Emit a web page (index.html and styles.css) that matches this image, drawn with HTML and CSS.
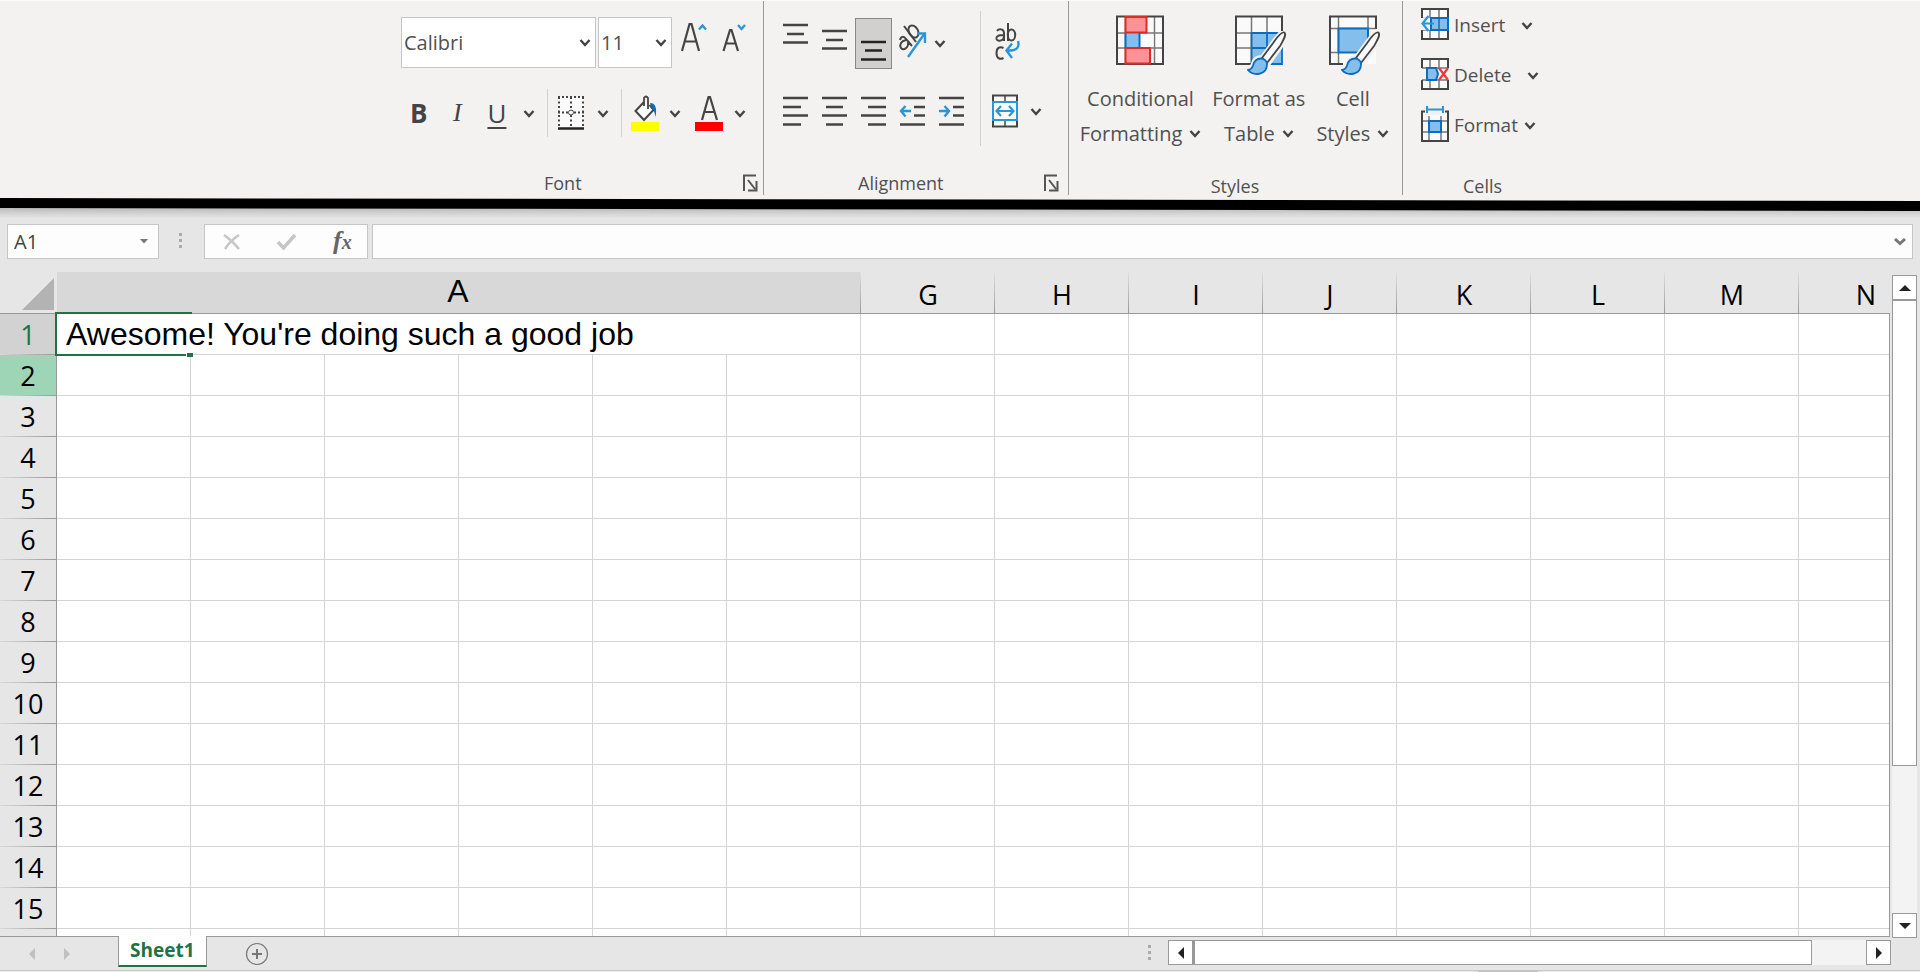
FILE: index.html
```html
<!DOCTYPE html>
<html lang="en">
<head>
<meta charset="utf-8">
<title>Sheet1</title>
<link rel="stylesheet" href="styles.css">
</head>
<body>
<svg class="defs" aria-hidden="true">
  <symbol id="chev" viewBox="0 0 12 10"><path d="M1.500 2L6 7l4.500-5" fill="none" stroke="#444" stroke-width="2.4"/></symbol>
  <symbol id="launch" viewBox="0 0 15 18"><path d="M1 17V1.5h12" fill="none" stroke="#555" stroke-width="2"/><path d="M5 6l7 9M13.5 7v9.500H5" fill="none" stroke="#555" stroke-width="2"/></symbol>
  <symbol id="brush" viewBox="0 0 40 46"><path d="M38 1c-3-1-7 4-12 11L15 27c-5-1-8 2-9 7-1 3-3 4-6 5 4 5 18 8 21-6L33 16c5-8 7-12 5-15z" fill="#f3f2f1" stroke="#f3f2f1" stroke-width="5"/><path d="M37.500 1.500c-3-1-7 4-11 10L15 27l5 5 13-17c4-7 6.500-11 4.500-13.500z" fill="#fafafa" stroke="#444" stroke-width="1.800"/><path d="M14 27.500c-5 0-7 3-8 7-1 3-2 4-5 4.500 5 6 19 6 19-6 0-3-3-5.500-6-5.500z" fill="#83beec" stroke="#0f6cbd" stroke-width="1.800"/></symbol>
</svg>

<header class="ribbon">
  <section class="group font-group" aria-label="Font">
    <div class="row pick-row">
      <span class="pick pick-name"><select aria-label="Font name"><option>Calibri</option></select><svg width="12" height="10"><use href="#chev"/></svg></span>
      <span class="pick pick-size"><select aria-label="Font size"><option>11</option></select><svg width="12" height="10"><use href="#chev"/></svg></span>
      <button class="tool grow" aria-label="Increase font size"><svg width="28" height="32" viewBox="0 0 28 32"><path d="M2 29L9.500 2h2L19 29M5 19.500h11" fill="none" stroke="#444" stroke-width="2.200"/><path d="M19 7.500l3.500-4 3.500 4" fill="none" stroke="#2b95d6" stroke-width="2.400"/></svg></button>
      <button class="tool shrink" aria-label="Decrease font size"><svg width="25" height="32" viewBox="0 0 25 32"><path d="M1.500 29L8 8h1.500L16 29M4 21.500h9.500" fill="none" stroke="#444" stroke-width="2.200"/><path d="M16 3l3.500 4L23 3" fill="none" stroke="#2b95d6" stroke-width="2.400"/></svg></button>
    </div>
    <div class="row style-row">
      <button class="tool glyph bold">B</button>
      <button class="tool glyph italic">I</button>
      <button class="tool glyph under">U</button>
      <button class="tool drop" aria-label="Underline options"><svg width="12" height="10"><use href="#chev"/></svg></button>
      <i class="rule"></i>
      <button class="tool" aria-label="Bottom border"><svg width="28" height="36" viewBox="0 0 28 36"><rect x="1" y="2" width="26" height="30" fill="#fafafa"/><path d="M1 2h26M1 17.500h26" stroke="#444" stroke-width="2" stroke-dasharray="2 2"/><path d="M2 2v31M14 2v31M26 2v31" stroke="#444" stroke-width="2" stroke-dasharray="2 2.500"/><circle cx="14" cy="17.500" r="2.500" fill="#fafafa" stroke="#444"/><path d="M1 33.500h26" stroke="#222" stroke-width="2.500"/></svg></button>
      <button class="tool drop" aria-label="Border options"><svg width="12" height="10"><use href="#chev"/></svg></button>
      <i class="rule"></i>
      <button class="tool" aria-label="Fill color"><svg width="28" height="36" viewBox="0 0 28 36"><path d="M13 7L4.500 16l8.500 9 9.500-10-4-5" fill="#fafafa" stroke="#444" stroke-width="2"/><path d="M13 11V3q2-3 4 0v11" fill="none" stroke="#444" stroke-width="1.800"/><path d="M19 8c6 0 7 6 5.500 14-1-4-1-7-4-9z" fill="#0f6cbd"/><path d="M0 27h28v9H0z" fill="#ff0"/></svg></button>
      <button class="tool drop drop-fill" aria-label="Fill options"><svg width="12" height="10"><use href="#chev"/></svg></button>
      <button class="tool" aria-label="Font color"><svg width="28" height="36" viewBox="0 0 28 36"><path d="M7 25L13.500 2h1.500L22 25M9.500 17h10" fill="none" stroke="#444" stroke-width="2.200"/><path d="M0 27h28v9H0z" fill="red"/></svg></button>
      <button class="tool drop drop-color" aria-label="Font color options"><svg width="12" height="10"><use href="#chev"/></svg></button>
    </div>
    <footer><span>Font</span><button class="tool launcher" aria-label="Font settings"><svg width="15" height="18"><use href="#launch"/></svg></button></footer>
  </section>

  <section class="group align-group" aria-label="Alignment">
    <div class="align-main">
      <div class="row align-top">
        <button class="tool" aria-label="Top align"><svg width="25" height="30" viewBox="0 0 25 30"><path d="M0 4h25M4 13h17M0 21.500h25" stroke="#444" stroke-width="2.400"/></svg></button>
        <button class="tool" aria-label="Middle align"><svg width="25" height="30" viewBox="0 0 25 30"><path d="M0 10h25M4 19h17M0 27.500h25" stroke="#444" stroke-width="2.400"/></svg></button>
        <button class="tool pressed" aria-label="Bottom align"><svg width="25" height="42" viewBox="0 0 25 42"><path d="M0 19h25M4 27.500h17M0 36.500h25" stroke="#222" stroke-width="2.400"/></svg></button>
        <button class="tool orient" aria-label="Orientation"><svg width="30" height="38" viewBox="0 0 30 38"><g fill="none" stroke="#444" stroke-width="2"><path d="M2 19c1-4 4-4 6-1l6 7M8 19c-5 1-7 5-5 8s8 0 7-6"/><path d="M6 5l12 16"/><ellipse cx="15.500" cy="10.500" rx="4.500" ry="6.500" transform="rotate(-30 15.500 10.500)"/></g><path d="M10 36L27 12M19 12.500h8V22" fill="none" stroke="#2b95d6" stroke-width="2.400"/></svg></button>
        <button class="tool drop" aria-label="Orientation options"><svg width="12" height="10"><use href="#chev"/></svg></button>
      </div>
      <div class="row align-low">
        <button class="tool" aria-label="Align left"><svg width="25" height="32" viewBox="0 0 25 32"><path d="M0 3h25M0 12h18M0 20.500h25M0 29.500h18" stroke="#444" stroke-width="2.400"/></svg></button>
        <button class="tool" aria-label="Center"><svg width="25" height="32" viewBox="0 0 25 32"><path d="M0 3h25M4 12h17M0 20.500h25M4 29.500h17" stroke="#444" stroke-width="2.400"/></svg></button>
        <button class="tool" aria-label="Align right"><svg width="25" height="32" viewBox="0 0 25 32"><path d="M0 3h25M7 12h18M0 20.500h25M7 29.500h18" stroke="#444" stroke-width="2.400"/></svg></button>
        <button class="tool" aria-label="Decrease indent"><svg width="25" height="32" viewBox="0 0 25 32"><path d="M0 3h25M14 12h11M14 20.500h11M0 29.500h25" stroke="#444" stroke-width="2.400"/><path d="M11 16H1M5.500 11L1 16l4.500 5.500" fill="none" stroke="#2b95d6" stroke-width="2.400"/></svg></button>
        <button class="tool" aria-label="Increase indent"><svg width="25" height="32" viewBox="0 0 25 32"><path d="M0 3h25M14 12h11M14 20.500h11M0 29.500h25" stroke="#444" stroke-width="2.400"/><path d="M0 16h10M5.500 11l4.500 5-4.500 5.500" fill="none" stroke="#2b95d6" stroke-width="2.400"/></svg></button>
      </div>
    </div>
    <div class="align-side">
      <button class="tool wrap" aria-label="Wrap text"><svg width="26" height="38" viewBox="0 0 26 38"><g fill="none" stroke="#444" stroke-width="2"><path d="M2 9c2-3 7-2 7 2v8M9 13c-7 0-8 2-7.500 4 1 3 7 2 7.500-2"/><path d="M13 1v18"/><ellipse cx="16.500" cy="13" rx="3.700" ry="5.500"/><path d="M8.500 26c-4-2-7 0-7 5s3 7 7 5"/></g><path d="M23 19c2 7-2 10-11 9.500M17 21.500L11.500 28.500 17 36" fill="none" stroke="#2b95d6" stroke-width="2.400"/></svg></button>
      <span class="merge"><button class="tool" aria-label="Merge and center"><svg width="26" height="34" viewBox="0 0 26 34"><rect x="1" y="1.500" width="24" height="31" fill="#fafafa" stroke="#444" stroke-width="2"/><path d="M13 2v6M13 26v6" stroke="#444" stroke-width="1.500"/><rect x="1" y="8" width="24" height="18" fill="#fafafa" stroke="#2b95d6" stroke-width="2"/><path d="M4.500 17h17M9 12l-4.500 5L9 22M17 12l4.500 5L17 22" fill="none" stroke="#2b95d6" stroke-width="2.200"/></svg></button>
      <button class="tool drop" aria-label="Merge options"><svg width="12" height="10"><use href="#chev"/></svg></button></span>
    </div>
    <footer><span>Alignment</span><button class="tool launcher" aria-label="Alignment settings"><svg width="15" height="18"><use href="#launch"/></svg></button></footer>
  </section>

  <section class="group styles-group" aria-label="Styles">
    <div class="bigs">
      <button class="tool big"><svg width="54" height="62" viewBox="0 0 54 62"><path d="M4 2h46v47H4z" fill="#fafafa"/><path d="M12.500 2v47M41.500 2v47M4 18h46M4 33h46" stroke="#777" stroke-width="1.500"/><path d="M4 1.500h46v47.500H4z" fill="none" stroke="#444" stroke-width="2"/><path d="M27.500 19h13v13h-13z" fill="#fafafa"/><path d="M12.500 18h14v15h-14z" fill="#83beec"/><path d="M26.500 18v15M12.500 18v15" stroke="#0f6cbd" stroke-width="2"/><path d="M12.500 2h21v15.500h-21zM12.500 33h24.500v15.500H12.500z" fill="#ff9197" stroke="#dc2c24" stroke-width="2"/></svg><span>Conditional</span><span>Formatting <svg width="12" height="10"><use href="#chev"/></svg></span></button>
      <button class="tool big"><svg width="54" height="62" viewBox="0 0 54 62"><path d="M4 2h46v47H4z" fill="#fafafa"/><path d="M19.500 18H50v31H19.500z" fill="#83beec"/><path d="M19.500 2v47M35 2v16M4 18h46M4 33h46" stroke="#777" stroke-width="1.500"/><path d="M19.500 49V18H50v31zM35 18v31M19.500 33H50" fill="none" stroke="#0f6cbd" stroke-width="1.800"/><path d="M50 17V1.500H4V49h15" fill="none" stroke="#444" stroke-width="2"/><use href="#brush" x="15" y="16" width="40" height="46"/></svg><span>Format as</span><span>Table <svg width="12" height="10"><use href="#chev"/></svg></span></button>
      <button class="tool big"><svg width="54" height="62" viewBox="0 0 54 62"><path d="M4 2h46v47H4z" fill="#fafafa"/><path d="M12.500 2v47M42 2v12M4 13.500h46M4 37.500h9" stroke="#777" stroke-width="1.500"/><path d="M12.500 13.500H42V37.500H12.500z" fill="#83beec" stroke="#0f6cbd" stroke-width="2"/><path d="M50 14V1.500H4V49h13" fill="none" stroke="#444" stroke-width="2"/><use href="#brush" x="15" y="16" width="40" height="46"/></svg><span>Cell</span><span>Styles <svg width="12" height="10"><use href="#chev"/></svg></span></button>
    </div>
    <footer><span>Styles</span></footer>
  </section>

  <section class="group cells-group" aria-label="Cells">
    <button class="tool line"><svg width="28" height="36" viewBox="0 0 28 36"><path d="M1 3h26v30H1z" fill="#fafafa"/><path d="M9 3v30M18 3v30M1 12.500h26M1 24h26" stroke="#777" stroke-width="1.500"/><path d="M1 3h26v30H1z" fill="none" stroke="#444" stroke-width="2"/><path d="M0 12h10v12H0z" fill="#f3f2f1"/><path d="M10 12h17v12H10z" fill="#83beec" stroke="#0f6cbd" stroke-width="2"/><path d="M18 12v12" stroke="#0f6cbd" stroke-width="1.500"/><path d="M13 17.500H1.500M7.500 10L1.500 17.500 7.500 25" fill="none" stroke="#2b95d6" stroke-width="2.200"/></svg><span>Insert</span><svg class="gap-a" width="12" height="10"><use href="#chev"/></svg></button>
    <button class="tool line"><svg width="28" height="36" viewBox="0 0 28 36"><path d="M1 3h26v30H1z" fill="#fafafa"/><path d="M9 3v30M18 3v30M1 12h26M1 24h26" stroke="#777" stroke-width="1.500"/><path d="M1 12V3h26v9M1 24v9h26v-9" fill="none" stroke="#444" stroke-width="2"/><path d="M0 13h28v10H0z" fill="#f3f2f1"/><path d="M6 12h9l2 6-2 6H6z" fill="#83beec" stroke="#0f6cbd" stroke-width="2"/><path d="M18 12l9 12M27 12l-9 12" stroke="#f03a3e" stroke-width="2.200"/></svg><span>Delete</span><svg class="gap-b" width="12" height="10"><use href="#chev"/></svg></button>
    <button class="tool line"><svg width="28" height="36" viewBox="0 0 28 36"><path d="M1 6h26v29H1z" fill="#fafafa"/><path d="M8 10v25M20 10v25M1 15h26M1 26h26" stroke="#777" stroke-width="1.500"/><path d="M4 5.500H1V35h26V5.500h-3" fill="none" stroke="#444" stroke-width="2"/><path d="M4 5h20v4H4z" fill="#f3f2f1"/><path d="M8 15h12v11H8z" fill="#83beec" stroke="#0f6cbd" stroke-width="2"/><path d="M6 0v7M22 0v7M6 3.500h16" stroke="#2b95d6" stroke-width="2"/></svg><span>Format</span><svg class="gap-c" width="12" height="10"><use href="#chev"/></svg></button>
    <footer><span>Cells</span></footer>
  </section>
</header>
<div class="divider"></div>

<div class="formula-bar">
  <label class="name-box"><input type="text" value="A1" aria-label="Name box"><svg width="8" height="5"><path d="M0 0h8L4 4.500z" fill="#777"/></svg></label>
  <svg class="dots" width="3" height="15"><path d="M0 0h3v3H0zM0 6h3v3H0zM0 12h3v3H0z" fill="#aaa"/></svg>
  <div class="fx-box">
    <button class="tool" aria-label="Cancel"><svg width="18" height="18" viewBox="0 0 18 18"><path d="M1 2c6 4 11 9 15 14M16 2C10 6 5 11 2 16" fill="none" stroke="#c6c6c6" stroke-width="2.500"/></svg></button>
    <button class="tool" aria-label="Enter"><svg width="20" height="18" viewBox="0 0 20 18"><path d="M1 9l5.500 6L18 2" fill="none" stroke="#c6c6c6" stroke-width="3.500"/></svg></button>
    <button class="tool fx" aria-label="Insert function">f<small>x</small></button>
  </div>
  <div class="formula"><input type="text" aria-label="Formula"><button class="tool" aria-label="Expand formula bar"><svg width="12" height="10" viewBox="0 0 12 10"><path d="M1 2l5 4.500L11 2" fill="none" stroke="#777" stroke-width="3"/></svg></button></div>
</div>

<main class="sheet">
  <div class="grid">
    <table>
      <colgroup><col class="c-num"><col span="14" class="c-cell"></colgroup>
      <thead>
        <tr><th class="corner"><svg width="32" height="32"><path d="M32 0v32H0z" fill="#b3b3b3"/></svg></th><th class="wide" colspan="6">A</th><th>G</th><th>H</th><th>I</th><th>J</th><th>K</th><th>L</th><th>M</th><th>N</th></tr>
      </thead>
      <tbody>
        <tr><th class="current">1</th><td class="entry" colspan="6">Awesome! You're doing such a good job<i class="cursor"></i></td><td></td><td></td><td></td><td></td><td></td><td></td><td></td><td></td></tr>
        <tr><th class="hint">2</th><td></td><td></td><td></td><td></td><td></td><td></td><td></td><td></td><td></td><td></td><td></td><td></td><td></td><td></td></tr>
        <tr><th>3</th><td></td><td></td><td></td><td></td><td></td><td></td><td></td><td></td><td></td><td></td><td></td><td></td><td></td><td></td></tr>
        <tr><th>4</th><td></td><td></td><td></td><td></td><td></td><td></td><td></td><td></td><td></td><td></td><td></td><td></td><td></td><td></td></tr>
        <tr><th>5</th><td></td><td></td><td></td><td></td><td></td><td></td><td></td><td></td><td></td><td></td><td></td><td></td><td></td><td></td></tr>
        <tr><th>6</th><td></td><td></td><td></td><td></td><td></td><td></td><td></td><td></td><td></td><td></td><td></td><td></td><td></td><td></td></tr>
        <tr><th>7</th><td></td><td></td><td></td><td></td><td></td><td></td><td></td><td></td><td></td><td></td><td></td><td></td><td></td><td></td></tr>
        <tr><th>8</th><td></td><td></td><td></td><td></td><td></td><td></td><td></td><td></td><td></td><td></td><td></td><td></td><td></td><td></td></tr>
        <tr><th>9</th><td></td><td></td><td></td><td></td><td></td><td></td><td></td><td></td><td></td><td></td><td></td><td></td><td></td><td></td></tr>
        <tr><th>10</th><td></td><td></td><td></td><td></td><td></td><td></td><td></td><td></td><td></td><td></td><td></td><td></td><td></td><td></td></tr>
        <tr><th>11</th><td></td><td></td><td></td><td></td><td></td><td></td><td></td><td></td><td></td><td></td><td></td><td></td><td></td><td></td></tr>
        <tr><th>12</th><td></td><td></td><td></td><td></td><td></td><td></td><td></td><td></td><td></td><td></td><td></td><td></td><td></td><td></td></tr>
        <tr><th>13</th><td></td><td></td><td></td><td></td><td></td><td></td><td></td><td></td><td></td><td></td><td></td><td></td><td></td><td></td></tr>
        <tr><th>14</th><td></td><td></td><td></td><td></td><td></td><td></td><td></td><td></td><td></td><td></td><td></td><td></td><td></td><td></td></tr>
        <tr><th>15</th><td></td><td></td><td></td><td></td><td></td><td></td><td></td><td></td><td></td><td></td><td></td><td></td><td></td><td></td></tr>
        <tr><th></th><td></td><td></td><td></td><td></td><td></td><td></td><td></td><td></td><td></td><td></td><td></td><td></td><td></td><td></td></tr>
      </tbody>
    </table>
  </div>
  <div class="vscroll">
    <button class="arrow" aria-label="Scroll up"><svg width="12" height="6"><path d="M0 6h12L6 0z" fill="#222"/></svg></button>
    <div class="track"><div class="thumb"></div></div>
    <button class="arrow" aria-label="Scroll down"><svg width="12" height="6"><path d="M0 0h12L6 6z" fill="#222"/></svg></button>
  </div>
</main>

<nav class="tabs">
  <button class="tool prev" aria-label="Previous sheet"><svg width="6" height="12"><path d="M6 0v12L0 6z" fill="#c0c0c0"/></svg></button>
  <button class="tool next" aria-label="Next sheet"><svg width="6" height="12"><path d="M0 0v12l6-6z" fill="#c0c0c0"/></svg></button>
  <button class="tab">Sheet1</button>
  <button class="tool add" aria-label="New sheet"><svg width="24" height="24" viewBox="0 0 24 24"><circle cx="12" cy="12" r="10.500" fill="none" stroke="#777" stroke-width="1.200"/><path d="M12 7v10M7 12h10" stroke="#777" stroke-width="2"/></svg></button>
  <svg class="dots" width="3" height="15"><path d="M0 0h3v3H0zM0 6h3v3H0zM0 12h3v3H0z" fill="#aaa"/></svg>
  <div class="hscroll">
    <button class="arrow" aria-label="Scroll left"><svg width="6" height="12"><path d="M6 0v12L0 6z" fill="#222"/></svg></button>
    <div class="track"><div class="thumb"></div></div>
    <button class="arrow" aria-label="Scroll right"><svg width="6" height="12"><path d="M0 0v12l6-6z" fill="#222"/></svg></button>
  </div>
</nav>
<div class="status"><i></i></div>
</body>
</html>
```
FILE: styles.css
```css
* { box-sizing: border-box; }
body {
  margin: 0;
  height: 100vh;
  display: flex;
  flex-direction: column;
  overflow: hidden;
  background: #e6e6e6;
  font-family: "Open Sans", "Noto Sans", sans-serif;
  color: #000;
}
button, select, input { font: inherit; color: inherit; }
svg { display: block; flex: none; overflow: visible; }
.defs { position: absolute; width: 0; height: 0; }
.tool { display: flex; align-items: center; padding: 0; border: 0; background: none; }

/* Ribbon */
.ribbon {
  flex: none;
  display: flex;
  min-height: 198px;
  padding: 0 0 3px 390px;
  background: #f3f2f1;
  border-top: 1px solid #fafafa;
  font-size: 20px;
  color: #505050;
}
.group { display: flex; flex-direction: column; border-right: 1px solid #999; }
.group footer {
  display: flex;
  justify-content: center;
  align-items: center;
  margin-top: auto;
  font-size: 18px;
  line-height: 24px;
}
.launcher { margin-left: auto; }
.row { display: flex; }

.font-group { width: 374px; padding: 16px 5px 0 11px; }
.pick-row { gap: 2px; }
.pick { display: grid; align-items: center; height: 51px; background: #fff; border: 1px solid #c6c6c6; }
.pick select, .pick svg { grid-area: 1 / 1; }
.pick select { width: 100%; height: 49px; padding: 0 2px; border: 0; background: none; appearance: none; }
.pick svg { justify-self: end; margin-right: 4px; pointer-events: none; }
.pick-name { width: 195px; }
.pick-size { width: 74px; }
.grow { align-self: flex-start; margin-left: 6px; padding-top: 5px; }
.shrink { align-self: flex-start; margin-left: 12px; padding-top: 5px; }
.style-row { height: 48px; margin-top: 21px; padding-left: 9px; align-items: center; }
.glyph { justify-content: center; width: 20px; font-size: 26px; line-height: 32px; color: #444; }
.bold { font-weight: 700; }
.italic { margin-left: 22px; font-family: "Liberation Serif", serif; font-style: italic; }
.under { margin-left: 22px; text-decoration: underline; text-decoration-thickness: 2px; text-underline-offset: 4px; }
.drop { padding: 2px 0 0; }
.style-row .drop { margin: 0 12px; }
.style-row .under + .drop { margin-left: 17px; }
.style-row .drop-fill { margin: 0 14px 0 10px; }
.style-row .drop-color { margin-left: 11px; }
.rule { width: 1px; height: 48px; margin-right: 9px; background: #d0d0d0; }
.font-group footer span { padding-left: 143px; }

.align-group { display: grid; grid-template: 1fr auto / 216px 1fr; width: 305px; }
.align-main { padding: 10px 0 0 19px; }
.align-top { gap: 14px; height: 62px; align-items: flex-start; padding-top: 7px; }
.align-top .tool { padding-top: 3px; }
.align-top .pressed { margin: 0 -6px; padding: 3px 5px; height: 51px; background: #d2d0ce; border: 1px solid #8a8886; }
.align-top .orient { margin-left: -2px; }
.align-top .drop { margin-left: -8px; padding-top: 21px; }
.align-low { gap: 14px; padding-top: 22px; }
.align-side { margin-top: 10px; height: 135px; padding: 11px 0 0 11px; border-left: 1px solid #d0d0d0; }
.wrap { padding-left: 3px; }
.merge { display: flex; gap: 12px; padding-top: 34px; }
.align-group footer { grid-column: 1 / 3; padding-right: 9px; }
.align-group footer span { padding-left: 94px; }

.styles-group { width: 334px; }
.bigs { display: flex; justify-content: center; gap: 11px; padding: 14px 2px 0 0; }
.big { flex-direction: column; line-height: 35px; }
.big > svg { margin-bottom: 4px; }
.big span { display: flex; align-items: center; gap: 7px; white-space: nowrap; }
.styles-group footer { padding-right: 1px; margin-bottom: -3px; }

.cells-group { border-right: 0; padding: 5px 0 0 18px; }
.line { height: 50px; align-items: flex-start; font-size: 19px; line-height: 38px; }
.line span { padding-left: 5px; }
.line svg + span + svg { margin-top: 15px; }
.gap-a { margin-left: 16px; }
.gap-b { margin-left: 16px; }
.gap-c { margin-left: 6px; }
.cells-group footer { justify-content: flex-start; padding-left: 42px; margin-bottom: -3px; }

.divider { flex: none; height: 21px; background: linear-gradient(#f3f2f1 4px, #bbb 10px, #e6e6e6 20px); }
.divider::before {
  content: "";
  display: block;
  height: 13px;
  background: #000;
  clip-path: polygon(0 0, 100% 3px, 100% 100%, 0 10px);
}

/* Formula bar */
.formula-bar { flex: none; display: flex; height: 53px; padding: 5px 7px 13px; font-size: 20px; color: #444; }
.name-box, .fx-box, .formula { display: flex; align-items: center; background: #fdfdfd; border: 1px solid #c6c6c6; }
.name-box { width: 152px; padding: 0 10px 0 6px; }
.name-box input, .formula input { flex: 1; min-width: 0; padding: 0; border: 0; background: none; }
.formula-bar .dots { margin: 9px 21px 0 20px; }
.fx-box { width: 164px; margin-left: 1px; padding-left: 18px; }
.fx-box .tool + .tool { margin-left: 36px; }
.fx-box .fx { margin-left: 32px; align-items: baseline; font: italic 700 26px/30px "Liberation Serif", serif; color: #666; }
.fx small { font-size: 20px; }
.formula { flex: 1; margin-left: 4px; padding-right: 6px; }

/* Sheet */
.sheet { flex: 1; display: flex; min-height: 0; }
.grid { position: relative; flex: 1; min-width: 0; overflow: hidden; border-bottom: 1px solid #999; }
.grid::after { content: ""; position: absolute; top: 41px; right: 0; bottom: 0; width: 1px; background: #999; }
table { width: 1933px; table-layout: fixed; border-collapse: separate; border-spacing: 0; }
.c-num { width: 57px; }
.c-cell { width: 134px; }
th, td { height: 41px; padding: 0; }
th { font-size: 27px; line-height: 30px; font-weight: 400; }
td { background: #fff; border-right: 1px solid #d4d4d4; border-bottom: 1px solid #d4d4d4; }
thead th {
  height: 42px;
  padding-top: 4px;
  border-bottom: 1px solid #999;
  background: linear-gradient(#e0e0e0, #999) right / 1px 100% no-repeat, #e6e6e6;
}
thead .wide { padding: 0 2px 4px 0; background-color: #d8d8d8; font: 32px/34px "Liberation Sans", sans-serif; }
thead .corner { padding: 0 3px 3px 0; background: #e6e6e6; vertical-align: bottom; }
.corner svg { margin-left: auto; }
tbody th {
  border-right: 1px solid #999;
  background: linear-gradient(to right, #d8d8d8, #999) bottom / 100% 1px no-repeat, #e6e6e6;
}
tbody .current { background-color: #d2d2d2; color: #217346; }
tbody .hint { background-color: #9fd5b7; }
.entry { position: relative; padding-left: 9px; font: 32px/38px "Liberation Sans", sans-serif; white-space: nowrap; }
.cursor { position: absolute; top: -2px; left: -2px; width: 137px; height: 44px; border: 2px solid #217346; border-right: 0; pointer-events: none; }
.cursor::after { content: ""; position: absolute; right: -1px; bottom: -3px; width: 6px; height: 4px; border-left: 1px solid #fff; background: #217346; }

.arrow { flex: none; display: flex; align-items: center; justify-content: center; width: 25px; height: 25px; padding: 0; background: #fff; border: 1px solid #999; }
.vscroll { display: flex; flex-direction: column; width: 30px; padding: 3px 3px 0 2px; margin-bottom: -1px; }
.track { flex: 1; display: flex; background: #f3f3f3; }
.thumb { background: #fff; border: 1px solid #999; }
.vscroll .track { flex-direction: column; }
.vscroll .thumb { flex: 0 0 76%; }

/* Sheet tabs */
.tabs { flex: none; display: flex; height: 33px; padding-right: 29px; }
.tabs .prev { margin-left: 29px; }
.tabs .next { margin-left: 29px; }
.tab {
  height: 31px;
  margin: -1px 0 0 48px;
  padding: 0 11px 1px;
  border: solid #999;
  border-width: 0 1px;
  border-bottom: 2px solid #217346;
  background: #fff;
  color: #217346;
  font-size: 19px;
  font-weight: 700;
  line-height: 26px;
  position: relative;
}
.add { margin-left: 38px; }
.tabs .dots { margin: 8px 17px 0 auto; }
.hscroll { display: flex; width: 39%; max-width: 723px; margin: 3px 0 5px; }
.hscroll .thumb { flex: 0 0 92%; border-left-width: 2px; }
.status { flex: none; height: 2px; border-top: 1px solid #c6c6c6; background: #e9e9e9; }
.status i { display: block; width: 60px; height: 1px; margin-left: 77%; background: #c0c0c0; }
```
